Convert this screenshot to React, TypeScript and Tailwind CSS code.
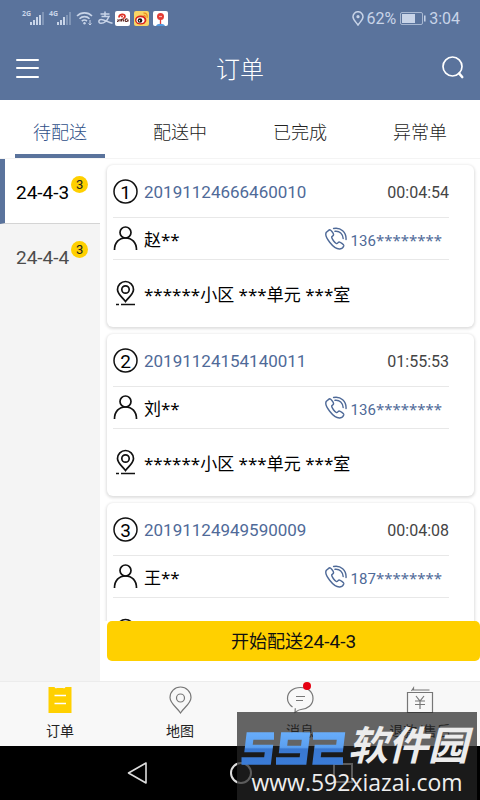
import type { ReactNode } from "react";

const orders = [
  { no: "1", id: "20191124666460010", time: "00:04:54", name: "赵**", prefix: "136" },
  { no: "2", id: "20191124154140011", time: "01:55:53", name: "刘**", prefix: "136" },
  { no: "3", id: "20191124949590009", time: "00:04:08", name: "王**", prefix: "187" },
];

const address = "******小区 ***单元 ***室";

function Signal({ label, weak }: { label: string; weak?: boolean }) {
  return (
    <span className="flex h-4 w-[22px] items-start">
      <span className="w-2 font-['Open_Sans',sans-serif] text-[7px] leading-[8px] font-bold">{label}</span>
      <svg viewBox="0 0 15 14" className="mt-px h-[14px] w-[15px] shrink-0" fill="currentColor" aria-hidden="true">
        <rect x="0" y="11" width="2" height="3" />
        <rect x="3" y="9" width="2" height="5" />
        <rect x="6" y="6" width="2" height="8" />
        <rect x="9" y="4" width="2" height="10" opacity={weak ? 0.35 : 1} />
        <rect x="12" y="1" width="2" height="13" opacity="0.35" />
      </svg>
    </span>
  );
}

function StatusBar() {
  return (
    <div className="flex h-9 items-center justify-between pr-5 pl-[22px] text-[#c8d4e8]">
      <div className="flex items-center gap-[5px]">
        <Signal label="2G" />
        <Signal label="4G" weak />
        <svg viewBox="0 0 17 14" className="h-[14px] w-[17px]" fill="none" stroke="currentColor" strokeWidth="1.6" aria-hidden="true">
          <path d="M1 5a10.5 10.5 0 0 1 15 0M3.500 7.700a7 7 0 0 1 10 0M5.800 10.200a4 4 0 0 1 5.200-.2" />
          <circle cx="8.500" cy="12.300" r="1.200" fill="currentColor" stroke="none" />
          <path d="M14 9v5M12.500 12.500 14 14l1.500-1.500" strokeWidth="1" />
        </svg>
        <svg viewBox="0 0 15 14" className="h-[14px] w-[15px]" fill="none" stroke="currentColor" strokeWidth="1.500" aria-hidden="true">
          <path d="M2.500 3h9M7 .5v5M3.500 5.500h7.500C9.500 9 6.500 12.300 3 12.300c-3 0-2.700-3.800.2-3.800 3.500 0 6.300 2.800 11.300 3.800" />
        </svg>
        <span className="ml-[-3px] flex gap-[4px]">
          <svg viewBox="0 0 15 15" className="size-[15px]" aria-hidden="true">
            <rect width="15" height="15" rx="2" fill="#fff" />
            <path d="M2 10.500c2 0 1.500-2 .5-2M5 8v2.500M6.500 10.500V8.500c1-1 2-.5 2 2M12.500 8c-3-.5-3 2.500-1 2.500 1 0 1.500-1 1.500-2v2" fill="none" stroke="#5c2420" strokeWidth="1.200" />
            <path d="M4 6.500C4 3 10 2 10 5.500c0 1.500-2 2-2 2" fill="none" stroke="#dc3328" strokeWidth="1.800" />
            <circle cx="7" cy="5.500" r="1" fill="#dc3328" />
          </svg>
          <svg viewBox="0 0 15 15" className="size-[15px]" aria-hidden="true">
            <rect width="15" height="15" rx="2" fill="#f8d565" />
            <ellipse cx="6.700" cy="9" rx="5.700" ry="4.500" fill="#d9251d" />
            <ellipse cx="6.500" cy="9.300" rx="4" ry="3" fill="#fff" />
            <circle cx="6" cy="9.500" r="2.300" fill="#111" />
            <circle cx="5.500" cy="9.700" r=".7" fill="#fff" />
            <path d="M9.500 2.200c3-.5 4.300 2 3.500 4.500M9.500 4.500c1.500-.3 2 .5 1.700 1.700" fill="none" stroke="#ee8a22" strokeWidth="1.200" />
          </svg>
          <svg viewBox="0 0 15 15" className="size-[15px]" aria-hidden="true">
            <rect width="15" height="15" rx="2" fill="#fff" />
            <path d="M3 15c1-3 8-3 9 0z" fill="#5299dc" />
            <circle cx="7.500" cy="5.500" r="3.500" fill="#e33b34" />
            <path d="M7.500 8v5" stroke="#e33b34" strokeWidth="1.300" />
            <path d="M6 5.500h3" stroke="#f7b5b2" strokeWidth="1.200" />
          </svg>
        </span>
      </div>
      <div className="flex items-center pt-px font-[Roboto,sans-serif] text-[16px] leading-5">
        <svg viewBox="0 0 12 15" className="h-[15px] w-3" fill="none" stroke="currentColor" strokeWidth="1.500" aria-hidden="true">
          <path d="M6 14C3.500 10.500 1 8.500 1 5.700a5 5 0 0 1 10 0C11 8.500 8.500 10.500 6 14z" />
          <circle cx="6" cy="5.700" r="1.600" fill="currentColor" stroke="none" />
        </svg>
        <span className="ml-[2px]">62%</span>
        <svg viewBox="0 0 26 13" className="mr-[3px] ml-1 h-[13px] w-[26px]" aria-hidden="true">
          <rect x=".5" y=".5" width="22" height="12" rx="1.500" fill="none" stroke="currentColor" opacity=".7" />
          <rect x="2" y="2" width="13" height="9" fill="currentColor" />
          <path d="M24.800 3.500v6" stroke="currentColor" strokeWidth="1.500" />
        </svg>
        <span>3:04</span>
      </div>
    </div>
  );
}

function Header() {
  return (
    <header className="h-[100px] bg-[#5a739c] text-white">
      <StatusBar />
      <div className="flex h-16 items-center justify-between pr-[15px] pl-4">
        <button type="button" aria-label="菜单" className="flex h-[19px] w-[23px] flex-col justify-between">
          <span className="h-[2px] w-full rounded bg-white" />
          <span className="h-[2px] w-full rounded bg-white" />
          <span className="h-[2px] w-full rounded bg-white" />
        </button>
        <h1 className="text-[24px] leading-8 font-light">订单</h1>
        <button type="button" aria-label="搜索">
          <svg viewBox="0 0 24 24" className="size-6" fill="none" stroke="currentColor" aria-hidden="true">
            <circle cx="11.500" cy="10.500" r="9.500" strokeWidth="1.700" />
            <path d="m18.200 17.500 3 3.500" strokeWidth="2.600" strokeLinecap="round" />
          </svg>
        </button>
      </div>
    </header>
  );
}

function Tabs() {
  return (
    <nav className="grid h-[59px] grid-cols-4 border-b border-[#f4f4f4] bg-white text-[18px] font-light text-[#222]">
      {["待配送", "配送中", "已完成", "异常单"].map((t, i) => (
        <button
          key={t}
          type="button"
          className={
            i === 0
              ? "mx-[15px] border-b-4 border-[#5a739c] pt-[8px] text-[#2f5088]"
              : "mx-[15px] border-b-4 border-transparent pt-[8px]"
          }
        >
          {t}
        </button>
      ))}
    </nav>
  );
}

function Batch({ label, active }: { label: string; active?: boolean }) {
  return (
    <button
      type="button"
      className={
        active
          ? "flex h-[65px] w-full items-center border-b border-l-5 border-b-[#d4d4d4] border-l-[#5a739c] bg-white pt-[3px] pl-[11px] text-black"
          : "flex h-[65px] w-full items-center pt-[2px] pl-4 text-[#4c4c4c]"
      }
    >
      <span className="font-[Roboto,sans-serif] text-[19px] leading-6">{label}</span>
      <span className="mb-4 ml-[2px] grid size-[17px] place-items-center rounded-full bg-[#ffd000] font-[Roboto,sans-serif] text-[13px] leading-4 text-[#222]">
        3
      </span>
    </button>
  );
}

function OrderCard({ order }: { order: (typeof orders)[number] }) {
  return (
    <article className="h-[162px] shrink-0 rounded-md bg-white pr-[25px] pl-[6px] shadow-[0_1px_3px_1px_rgba(0,0,0,0.13)]">
      <div className="flex h-[53px] items-center border-b border-[#e8e8e8]">
        <svg viewBox="0 0 25 25" className="size-[25px]" fill="none" stroke="#111" strokeWidth="1.500" aria-hidden="true">
          <circle cx="12.500" cy="12.500" r="11.500" />
          <text x="12.500" y="20" textAnchor="middle" fill="#000" stroke="none" className="font-[Roboto,sans-serif] text-[19px]">
            {order.no}
          </text>
        </svg>
        <a href="#order" className="ml-[6px] pt-1 font-[Roboto,sans-serif] text-[17px] text-[#4f6a98]">
          {order.id}
        </a>
        <time className="ml-auto pt-1 font-[Roboto,sans-serif] text-[16px] text-[#444]">{order.time}</time>
      </div>
      <div className="flex h-[42px] items-center border-b border-[#e8e8e8]">
        <svg viewBox="0 0 25 26" className="mb-[2px] h-[26px] w-[25px]" fill="none" stroke="#111" strokeWidth="1.700" aria-hidden="true">
          <circle cx="12.500" cy="7.500" r="5.500" />
          <path d="M1.500 25c0-7.500 4.500-12 11-12s11 4.500 11 12" />
        </svg>
        <span className="ml-[6px] pt-[3px] font-['Noto_Sans','Noto_Sans_CJK_SC',sans-serif] text-[17px] text-black">
          {order.name}
        </span>
        <a href="#call" className="mr-[7px] ml-auto flex items-center gap-[4px] text-[15px] text-[#4f6a98]">
          <svg viewBox="0 0 24 24" className="size-[23px]" fill="none" stroke="currentColor" strokeWidth="1.500" strokeLinejoin="round" strokeLinecap="round" aria-hidden="true">
            <path d="M5.500 3 2.500 5.500C-.5 9.500 10 23.500 16.500 23c2-.2 3.800-1.800 4.200-3.500.2-1-4-4-5-3.800-1.200.2-1.500 2-2.700 1.600-1.700-.6-5-5-5-6.800 0-1 2-1.200 2-2.500C10 6.500 6.800 2.300 5.500 3z" />
            <path d="M10 1.500c7.500-1.500 13.500 4 13 11.500M11.500 4.500c5-.5 8 3 8.500 7.500" />
          </svg>
          <span className="pt-1 font-[Roboto,sans-serif]">
            {order.prefix}
            <span className="font-['Noto_Sans',sans-serif]">********</span>
          </span>
        </a>
      </div>
      <div className="flex h-[66px] items-center">
        <svg viewBox="0 0 25 26" className="h-[26px] w-[25px]" fill="none" stroke="#111" strokeWidth="1.700" aria-hidden="true">
          <path d="M12.500 21.500C9 17 4.500 14 4.500 9.500a8 8 0 0 1 16 0c0 4.500-4.500 7.500-8 12z" />
          <circle cx="12.500" cy="9.500" r="3.700" />
          <path d="M3 24.500h3M8 24.500h14" />
        </svg>
        <span className="ml-[6px] pt-[3px] font-['Noto_Sans','Noto_Sans_CJK_SC',sans-serif] text-[17px] text-black">
          {address}
        </span>
      </div>
    </article>
  );
}

function NavItem({ label, dot, active, children }: { label: string; dot?: boolean; active?: boolean; children: ReactNode }) {
  return (
    <button type="button" className="flex flex-col items-center pt-1 text-[14px] leading-5 text-[#222]">
      <span className="relative">
        <svg
          viewBox="0 0 28 28"
          className={active ? "size-7 text-[#ffd000]" : "size-7 text-[#777]"}
          fill="none"
          stroke="currentColor"
          strokeWidth="1.200"
          aria-hidden="true"
        >
          {children}
        </svg>
        {dot && <span className="absolute top-[-4px] right-[3px] size-2 rounded-full bg-[#e60012]" />}
      </span>
      <span className="mt-[6px]">{label}</span>
    </button>
  );
}

function BottomNav() {
  return (
    <nav className="grid h-[65px] grid-cols-4 border-t border-[#ececec] bg-[#f8f8f8]">
      <NavItem label="订单" active>
        <path d="M2.500 1h6c.5 1.500 1.500 1.500 2.500 1h6c1 .5 2 .5 2.500-1h6v26h-23z" fill="currentColor" stroke="none" />
        <path d="M8.500 9.500h11.500M8.500 17.500h11.500" stroke="#fff" strokeWidth="1.600" />
      </NavItem>
      <NavItem label="地图">
        <path d="M14.500 27C11 21.500 4 17.500 4 11.500a10.500 10.500 0 0 1 21 0C25 17.500 18 21.500 14.500 27z" />
        <circle cx="14.500" cy="12" r="4" />
      </NavItem>
      <NavItem label="消息" dot>
        <path d="M6.500 21C3 18.500 1.500 16 1.500 12.500 1.500 6 7 1.500 14.500 1.500S27 6 27 12.500 21.500 23 15 23.500c-2.500.2-4 1.500-6 2.800l.3-4" />
        <path d="M10 10.500h9M10 14.500h7" />
      </NavItem>
      <NavItem label="退款/售后">
        <path d="M1.500 6.500h25v20h-25zM5.500 5l2-3v2h16" />
        <path d="m10 10 4 5 4-5M9 15h10M9 18.500h10M14 15v8" />
      </NavItem>
    </nav>
  );
}

function SystemBar() {
  return (
    <div className="flex h-[54px] items-center justify-center gap-[81px] bg-black text-[#ddd]">
      <button type="button" aria-label="返回">
        <svg viewBox="0 0 22 24" className="h-6 w-[22px]" fill="none" stroke="currentColor" strokeWidth="1.600" strokeLinejoin="round" aria-hidden="true">
          <path d="M1.500 12 19 2v20z" />
        </svg>
      </button>
      <button type="button" aria-label="主页" className="size-[22px] rounded-full border-2 border-current" />
      <button type="button" aria-label="最近任务" className="size-5 border-2 border-current" />
    </div>
  );
}

function Watermark() {
  return (
    <div className="absolute right-[3px] bottom-0 h-[88px] w-60 bg-[#252525]/70">
      <div className="flex h-[54px] items-end pl-[4px]">
        <svg viewBox="0 0 106 34" className="h-[34px] w-[106px] shrink-0" fill="none" strokeWidth="7.500" aria-hidden="true">
          <defs>
            <linearGradient id="blue" x1="0" y1="0" x2="0" y2="34" gradientUnits="userSpaceOnUse">
              <stop offset="0" stopColor="#68adfa" />
              <stop offset=".45" stopColor="#5b9ff0" />
              <stop offset=".5" stopColor="#3a78d0" />
              <stop offset="1" stopColor="#3a7cd8" />
            </linearGradient>
          </defs>
          <g stroke="url(#blue)">
            <path d="M33 4H9L7.500 16.500H28L26.500 29H.5" />
            <path d="M63 17.500H42L43.500 4H65L62 29H35" />
            <path d="M72 4h28l-1.500 12.500H77L75.500 29H102" />
          </g>
        </svg>
        <span className="mb-[3px] ml-px text-[40px] leading-[40px] font-bold whitespace-nowrap text-[#ececec] italic">
          软件园
        </span>
      </div>
      <p className="pt-px text-center font-['Open_Sans','Noto_Sans',sans-serif] text-[23px] leading-[30px] font-medium text-[#eee]">
        www.592xiazai.com
      </p>
    </div>
  );
}

export default function App() {
  return (
    <div className="relative flex h-screen flex-col overflow-hidden bg-white font-['Noto_Sans_CJK_SC',sans-serif]">
      <Header />
      <Tabs />
      <div className="flex min-h-0 flex-1">
        <aside className="w-[100px] shrink-0 bg-[#f4f4f4]">
          <Batch label="24-4-3" active />
          <Batch label="24-4-4" />
        </aside>
        <main className="flex min-w-0 flex-1 flex-col pb-5">
          <div className="flex min-h-0 flex-1 flex-col gap-[7px] overflow-hidden pt-[6px] pr-[6px] pl-[7px]">
            {orders.map((o) => (
              <OrderCard key={o.id} order={o} />
            ))}
          </div>
          <button type="button" className="ml-[7px] h-10 shrink-0 rounded-[5px] bg-[#ffd000] pt-[2px] text-[18px] text-[#111]">
            开始配送<span className="font-[Roboto,sans-serif] text-[19px]">24-4-3</span>
          </button>
        </main>
      </div>
      <BottomNav />
      <SystemBar />
      <Watermark />
    </div>
  );
}
